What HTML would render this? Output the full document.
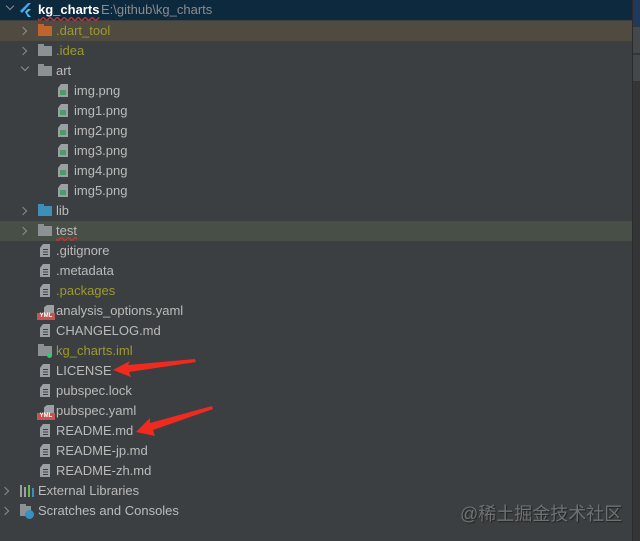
<!DOCTYPE html><html><head><style>
body{margin:0;width:640px;height:541px;background:#3c3f41;overflow:hidden;position:relative;font-family:"Liberation Sans","Noto Sans CJK SC",sans-serif;font-size:13px;color:#bbbbbb}
.r{position:absolute;left:0;width:632px;height:20px;line-height:20px;white-space:nowrap}
.t{position:absolute;top:0}
.ch{position:absolute;top:5px;width:5px;height:5px;border-right:1.5px solid #8c8c8c;border-bottom:1.5px solid #8c8c8c}
.cr{transform:rotate(-45deg)}.cd{transform:rotate(45deg);top:3px}
.fo{position:absolute;top:5px;width:14px;height:10px;background:#8c9194}
.fo:before{content:"";position:absolute;top:-2px;left:0;width:6px;height:2px;background:inherit}
.fi{position:absolute;top:3px;width:10px;height:13px;background:#9aa0a4;clip-path:polygon(30% 0,100% 0,100% 100%,0 100%,0 30%)}
.fi:after{content:"";position:absolute;left:3px;top:5px;width:5px;height:6px;background:repeating-linear-gradient(#3c3f41 0 1px,transparent 1px 2.5px)}
.img{position:absolute;top:3px;width:10px;height:13px;background:#9aa0a4;clip-path:polygon(30% 0,100% 0,100% 100%,0 100%,0 30%)}
.img:after{content:"";position:absolute;left:2px;top:6px;width:6px;height:5px;background:#4f9a6a}
.yml{position:absolute;top:4px;width:10px;height:8px;background:#9aa0a4;clip-path:polygon(30% 0,100% 0,100% 100%,0 100%,0 30%)}
.ymlb{position:absolute;top:12px;width:18px;height:7px;background:#c75450;color:#fff;font-size:6px;line-height:7px;text-align:center;font-weight:bold}
.o{color:#9c9a2d}
</style></head><body>
<div class="r" style="top:0;background:#0d293e"><div class="ch cd" style="left:7px"></div>
<svg style="position:absolute;left:20px;top:3px" width="12" height="14" viewBox="0 0 12 14"><path d="M8 0L0 8l2 2L11 0z" fill="#42a5f5"/><path d="M5 9l3-3h3L7 10l4 4H8z" fill="#4fc3f7"/></svg>
<span class="t" style="left:38px;color:#fff;font-weight:bold;text-decoration:underline wavy #c33;text-underline-offset:2px">kg_charts</span><span class="t" style="left:101px;color:#8a8d8f">E:\github\kg_charts</span></div>
<div class="r" style="top:21px;background:#4f4b41"><div class="ch cr" style="left:20px;top:7px"></div><div class="fo" style="left:38px;background:#c0642e"></div><span class="t o" style="left:56px">.dart_tool</span></div>
<div class="r" style="top:41px"><div class="ch cr" style="left:20px;top:7px"></div><div class="fo" style="left:38px"></div><span class="t o" style="left:56px">.idea</span></div>
<div class="r" style="top:61px"><div class="ch cd" style="left:22px"></div><div class="fo" style="left:38px"></div><span class="t" style="left:56px">art</span></div>
<div class="r" style="top:81px"><div class="img" style="left:58px"></div><span class="t" style="left:74px">img.png</span></div>
<div class="r" style="top:101px"><div class="img" style="left:58px"></div><span class="t" style="left:74px">img1.png</span></div>
<div class="r" style="top:121px"><div class="img" style="left:58px"></div><span class="t" style="left:74px">img2.png</span></div>
<div class="r" style="top:141px"><div class="img" style="left:58px"></div><span class="t" style="left:74px">img3.png</span></div>
<div class="r" style="top:161px"><div class="img" style="left:58px"></div><span class="t" style="left:74px">img4.png</span></div>
<div class="r" style="top:181px"><div class="img" style="left:58px"></div><span class="t" style="left:74px">img5.png</span></div>
<div class="r" style="top:201px"><div class="ch cr" style="left:20px;top:7px"></div><div class="fo" style="left:38px;background:#3d8fb8"></div><span class="t" style="left:56px">lib</span></div>
<div class="r" style="top:221px;background:#484f46"><div class="ch cr" style="left:20px;top:7px"></div><div class="fo" style="left:38px"></div><span class="t" style="left:56px;text-decoration:underline wavy #c33">test</span></div>
<div class="r" style="top:241px"><div class="fi" style="left:40px"></div><span class="t" style="left:56px">.gitignore</span></div>
<div class="r" style="top:261px"><div class="fi" style="left:40px"></div><span class="t" style="left:56px">.metadata</span></div>
<div class="r" style="top:281px"><div class="fi" style="left:40px"></div><span class="t o" style="left:56px">.packages</span></div>
<div class="r" style="top:301px"><div class="yml" style="left:44px"></div><div class="ymlb" style="left:37px">YML</div><span class="t" style="left:56px">analysis_options.yaml</span></div>
<div class="r" style="top:321px"><div class="fi" style="left:40px"></div><span class="t" style="left:56px">CHANGELOG.md</span></div>
<div class="r" style="top:341px"><div class="fo" style="left:38px"></div><div style="position:absolute;left:47px;top:12px;width:5px;height:5px;border-radius:50%;background:#2ecc71"></div><span class="t o" style="left:56px">kg_charts.iml</span></div>
<div class="r" style="top:361px"><div class="fi" style="left:40px"></div><span class="t" style="left:56px">LICENSE</span></div>
<div class="r" style="top:381px"><div class="fi" style="left:40px"></div><span class="t" style="left:56px">pubspec.lock</span></div>
<div class="r" style="top:401px"><div class="yml" style="left:44px"></div><div class="ymlb" style="left:37px">YML</div><span class="t" style="left:56px">pubspec.yaml</span></div>
<div class="r" style="top:421px"><div class="fi" style="left:40px"></div><span class="t" style="left:56px">README.md</span></div>
<div class="r" style="top:441px"><div class="fi" style="left:40px"></div><span class="t" style="left:56px">README-jp.md</span></div>
<div class="r" style="top:461px"><div class="fi" style="left:40px"></div><span class="t" style="left:56px">README-zh.md</span></div>
<div class="r" style="top:481px"><div class="ch cr" style="left:2px;top:7px"></div>
<svg style="position:absolute;left:20px;top:4px" width="14" height="12"><rect x="0" y="0" width="2" height="12" fill="#9aa0a4"/><rect x="4" y="2" width="2" height="10" fill="#9aa0a4"/><rect x="8" y="0" width="2" height="12" fill="#6fb84f"/><rect x="12" y="3" width="2" height="9" fill="#3d8fb8"/></svg>
<span class="t" style="left:38px">External Libraries</span></div>
<div class="r" style="top:501px"><div class="ch cr" style="left:2px;top:7px"></div><div class="fo" style="left:20px;width:11px"></div><div style="position:absolute;left:25px;top:9px;width:9px;height:9px;border-radius:50%;background:#3592c4"></div><span class="t" style="left:38px">Scratches and Consoles</span></div>
<div style="position:absolute;left:460px;top:500px;font-size:18px;color:#6e7173;text-shadow:1px 1px 1px #222">@稀土掘金技术社区</div>
<svg style="position:absolute;left:0;top:0" width="640" height="541">
<path d="M195 359L128 365L130 361L113 370L131 377L129 372L196 362Z" fill="#f02a1e"/>
<path d="M212 406L150 423L150 418L136 432L155 436L153 430L213 409Z" fill="#f02a1e"/>
</svg>
<div style="position:absolute;left:632px;top:0;width:1px;height:541px;background:#2b2b2b"></div>
<div style="position:absolute;left:633px;top:0;width:7px;height:541px;background:#333537"></div>
<div style="position:absolute;left:633px;top:0;width:7px;height:26px;background:#1f3a5c"></div>
<div style="position:absolute;left:633px;top:27px;width:7px;height:26px;background:#45484a"></div>
<div style="position:absolute;left:633px;top:55px;width:7px;height:26px;background:#45484a"></div>
</body></html>
